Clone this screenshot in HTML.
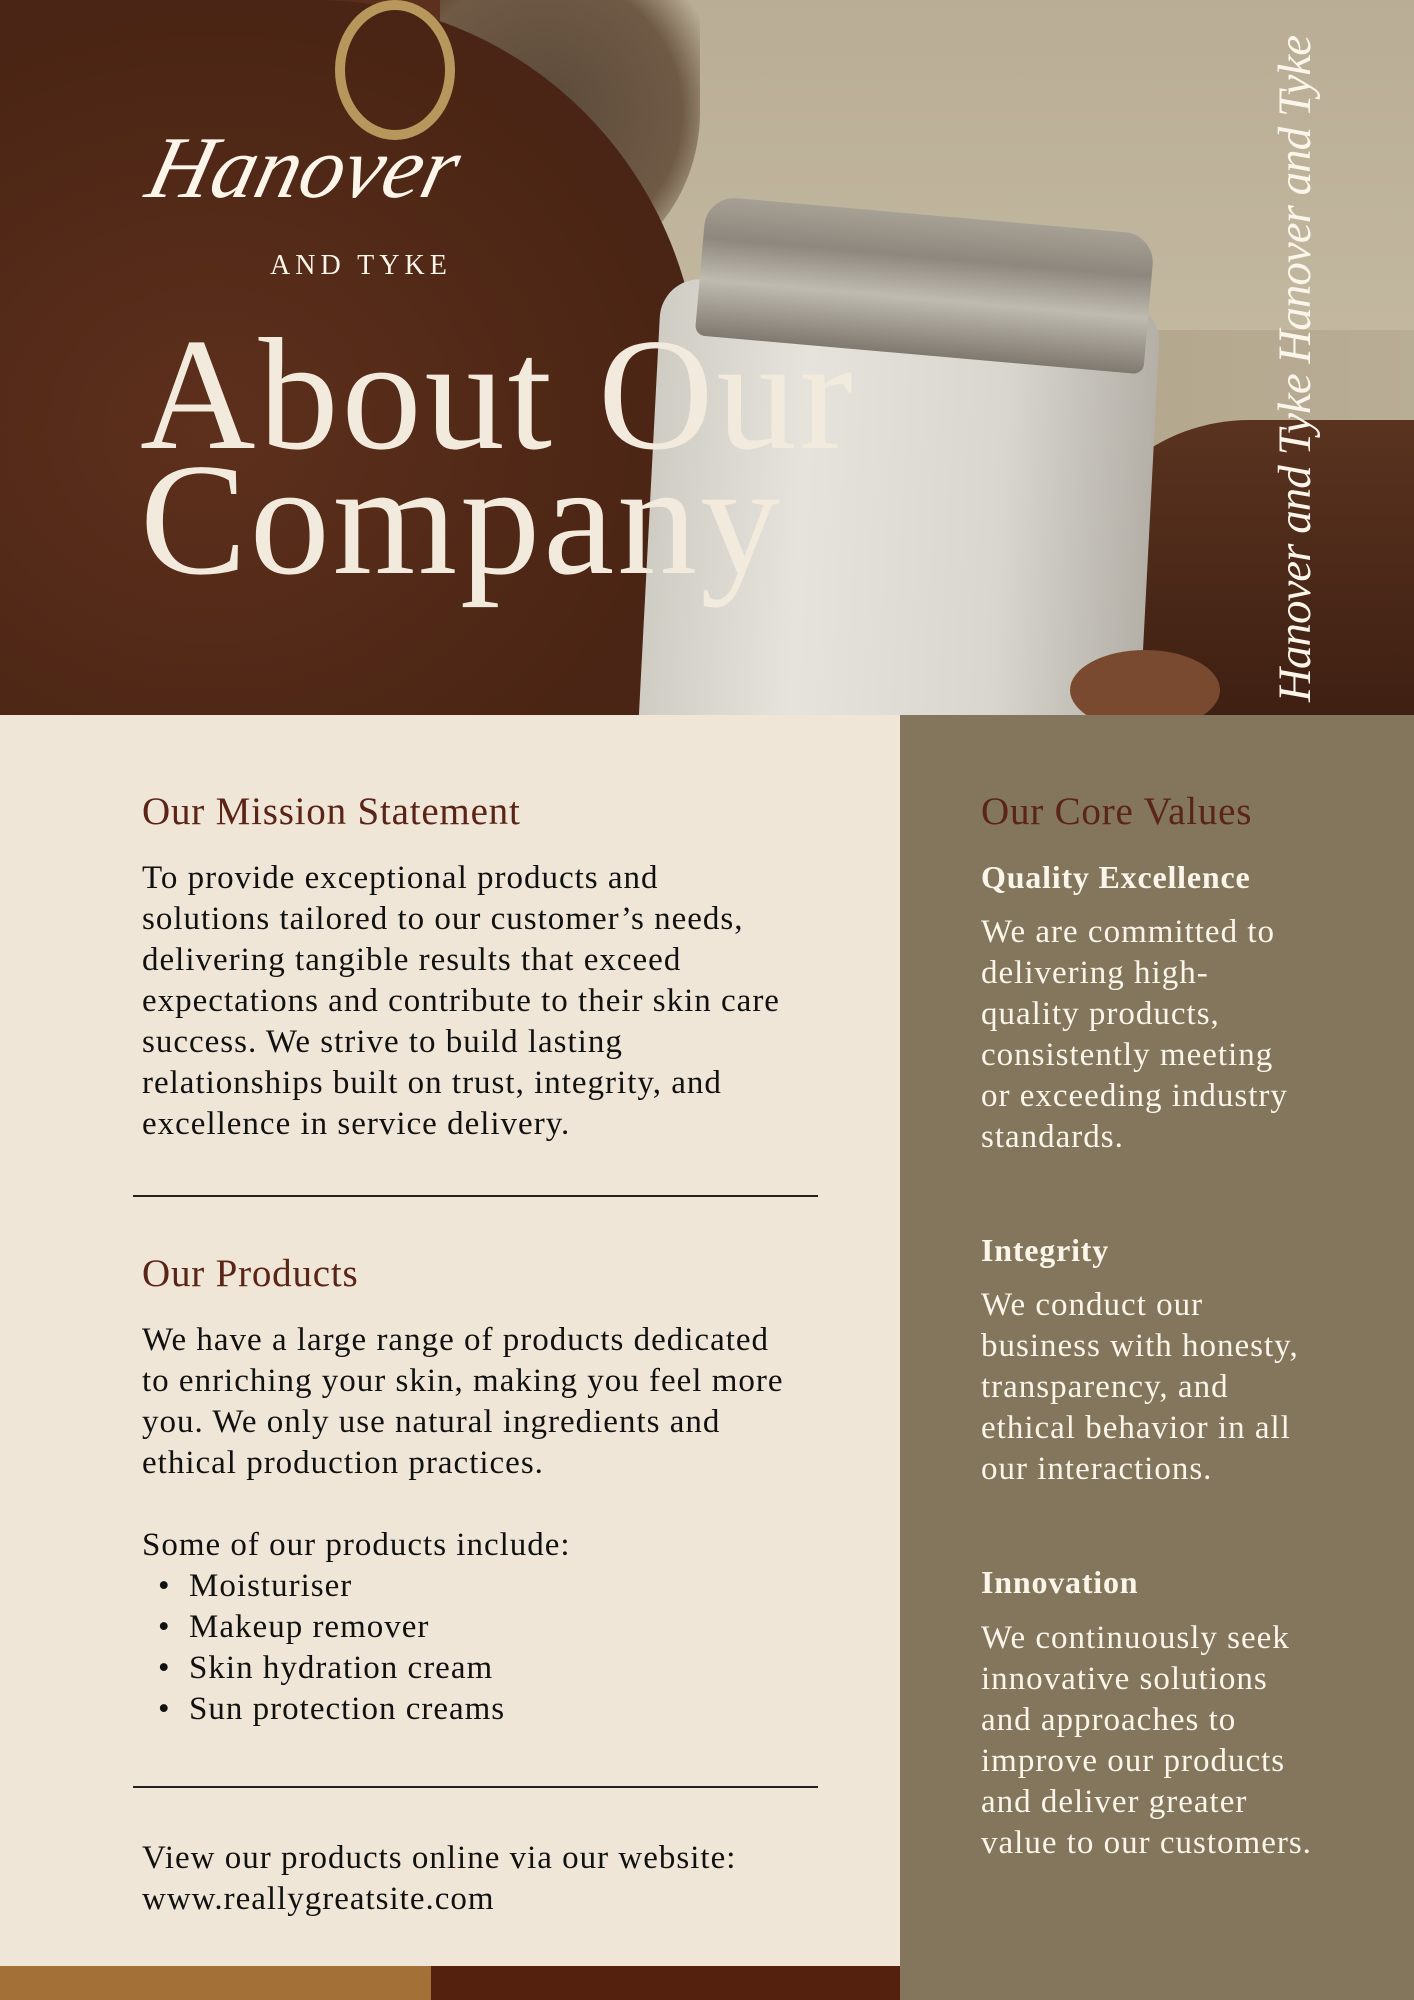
<!DOCTYPE html>
<html><head><meta charset="utf-8"><style>
*{margin:0;padding:0;box-sizing:border-box}
body{width:1414px;height:2000px;position:relative;overflow:hidden;background:#efe6d7;font-family:"Liberation Serif",serif}
.a{position:absolute;white-space:nowrap}
.hero{position:absolute;left:0;top:0;width:1414px;height:715px;overflow:hidden;background:linear-gradient(90deg,#4a2515 0%,#5e321d 35%,#6a3e25 52%,#8a7560 62%,#b3a68c 75%,#b8ad95 100%)}
.body{font-size:33px;line-height:41px;color:#111;letter-spacing:1px}
.h{font-size:39px;color:#5a2416;letter-spacing:0.8px}
.w{color:#fbf5ea}
.b{font-weight:bold;font-size:32px;letter-spacing:0.8px}
</style></head><body>
<div class="hero">
  <div class="a" style="left:560px;top:0;width:860px;height:330px;background:linear-gradient(180deg,#b9ad95,#c2b79f)"></div>
  <div class="a" style="left:440px;top:0;width:260px;height:280px;border-radius:0 0 60% 40%;background:radial-gradient(circle at 40% 40%,#5c4a3a,#6f5a45 60%,rgba(140,120,100,0) 80%)"></div>
  <div class="a" style="left:0;top:0;width:700px;height:715px;background:radial-gradient(ellipse at 30% 60%,#5d301c,#4a2414 70%);border-radius:0 55% 0 0"></div>
  <div class="a" style="left:1080px;top:420px;width:340px;height:300px;background:linear-gradient(180deg,#5a3320,#3e1f12);border-radius:50% 0 0 0"></div>
  <div class="a" style="left:650px;top:290px;width:500px;height:440px;background:linear-gradient(90deg,#cfccc4,#e6e3dc 30%,#d9d6cf 70%,#b4b0a8);border-radius:40px 40px 0 0;transform:rotate(3deg)"></div>
  <div class="a" style="left:700px;top:215px;width:450px;height:140px;background:linear-gradient(180deg,#a6a095,#8d877d 30%,#c0bbb1 60%,#7f796f);border-radius:30px 30px 10px 10px;transform:rotate(5deg)"></div>
  <div class="a" style="left:1070px;top:650px;width:150px;height:80px;background:#7a4a30;border-radius:50%"></div>
  <div class="a" style="left:335px;top:0;width:120px;height:140px;border:10px solid #b8975d;border-radius:50%"></div>
  <div class="a w" style="left:150px;top:125px;font-family:'Liberation Serif',serif;font-style:italic;font-size:88px;line-height:1;transform:skewX(-14deg)">Hanover</div>
  <div class="a w" style="left:270px;top:250px;font-size:28px;letter-spacing:5px">AND TYKE</div>
  <div class="a w" style="left:140px;top:332px;font-size:160px;line-height:125px;letter-spacing:3px;color:#f2eadc">About Our<br>Company</div>
  <div class="a w" style="left:1268px;top:702px;font-style:italic;font-size:47px;transform-origin:0 0;transform:rotate(-90deg);letter-spacing:-1px">Hanover and Tyke Hanover and Tyke</div>
</div>
<div class="a" style="left:900px;top:715px;width:514px;height:1285px;background:#83765c"></div>
<div class="a" style="left:0;top:1966px;width:431px;height:34px;background:#a37038"></div>
<div class="a" style="left:431px;top:1966px;width:469px;height:34px;background:#55210f"></div>

<div class="a h" style="left:142px;top:789px">Our Mission Statement</div>
<div class="a body" style="left:142px;top:858px">To provide exceptional products and<br>solutions tailored to our customer’s needs,<br>delivering tangible results that exceed<br>expectations and contribute to their skin care<br>success. We strive to build lasting<br>relationships built on trust, integrity, and<br>excellence in service delivery.</div>
<div class="a" style="left:133px;top:1195px;width:685px;height:2px;background:#222"></div>
<div class="a h" style="left:142px;top:1251px">Our Products</div>
<div class="a body" style="left:142px;top:1320px">We have a large range of products dedicated<br>to enriching your skin, making you feel more<br>you. We only use natural ingredients and<br>ethical production practices.<br><br>Some of our products include:</div>
<div class="a body" style="left:158px;top:1566px">•&nbsp;&nbsp;Moisturiser<br>•&nbsp;&nbsp;Makeup remover<br>•&nbsp;&nbsp;Skin hydration cream<br>•&nbsp;&nbsp;Sun protection creams</div>
<div class="a" style="left:133px;top:1786px;width:685px;height:2px;background:#222"></div>
<div class="a body" style="left:142px;top:1838px">View our products online via our website:<br>www.reallygreatsite.com</div>

<div class="a h" style="left:981px;top:789px">Our Core Values</div>
<div class="a w b" style="left:981px;top:859px">Quality Excellence</div>
<div class="a w body" style="left:981px;top:912px;color:#fbf5ea">We are committed to<br>delivering high-<br>quality products,<br>consistently meeting<br>or exceeding industry<br>standards.</div>
<div class="a w b" style="left:981px;top:1232px">Integrity</div>
<div class="a w body" style="left:981px;top:1285px;color:#fbf5ea">We conduct our<br>business with honesty,<br>transparency, and<br>ethical behavior in all<br>our interactions.</div>
<div class="a w b" style="left:981px;top:1564px">Innovation</div>
<div class="a w body" style="left:981px;top:1618px;color:#fbf5ea">We continuously seek<br>innovative solutions<br>and approaches to<br>improve our products<br>and deliver greater<br>value to our customers.</div>
</body></html>
